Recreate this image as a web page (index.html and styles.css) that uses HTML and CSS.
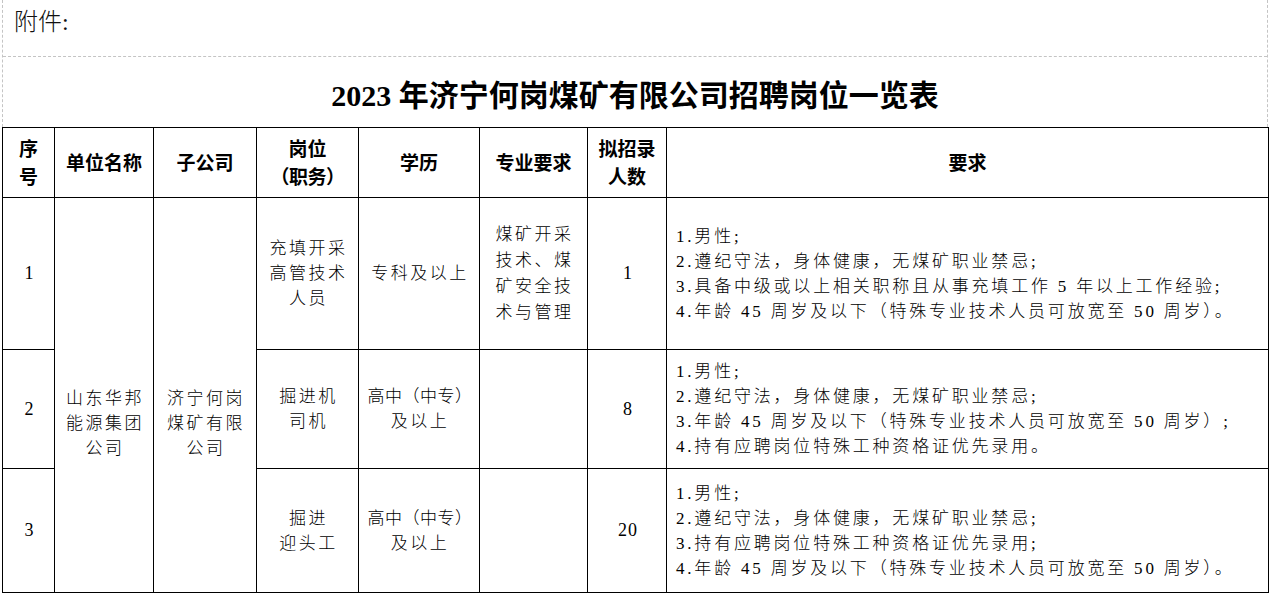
FILE: index.html
```html
<!DOCTYPE html>
<html lang="zh-CN">
<head>
<meta charset="utf-8">
<title>2023年济宁何岗煤矿有限公司招聘岗位一览表</title>
<link rel="stylesheet" href="styles.css">
</head>
<body>
<div class="sheet">
  <div class="head">
    <div class="attach">附件:</div>
    <div class="title">2023 年济宁何岗煤矿有限公司招聘岗位一览表</div>
  </div>
  <table class="grid">
    <colgroup>
      <col class="c-no"><col class="c-unit"><col class="c-sub"><col class="c-post">
      <col class="c-edu"><col class="c-major"><col class="c-num"><col class="c-req">
    </colgroup>
    <thead>
      <tr class="r-head">
        <th>序<br>号</th>
        <th>单位名称</th>
        <th>子公司</th>
        <th>岗位<br><span class="paren">（职务）</span></th>
        <th>学历</th>
        <th>专业要求</th>
        <th>拟招录<br>人数</th>
        <th>要求</th>
      </tr>
    </thead>
    <tbody>
      <tr class="r1">
        <td class="num">1</td>
        <td class="merged" rowspan="3">山东华邦<br>能源集团<br>公司</td>
        <td class="merged" rowspan="3">济宁何岗<br>煤矿有限<br>公司</td>
        <td>充填开采<br>高管技术<br>人员</td>
        <td>专科及以上</td>
        <td class="major">煤矿开采<br>技术、煤<br>矿安全技<br>术与管理</td>
        <td class="num">1</td>
        <td class="req">1.男性;<br>2.遵纪守法，身体健康，无煤矿职业禁忌;<br>3.具备中级或以上相关职称且从事充填工作 5 年以上工作经验;<br>4.年龄 45 周岁及以下（特殊专业技术人员可放宽至 50 周岁）。</td>
      </tr>
      <tr class="r2">
        <td class="num">2</td>
        <td>掘进机<br>司机</td>
        <td><span class="tight">高中（中专）</span><br>及以上</td>
        <td></td>
        <td class="num">8</td>
        <td class="req">1.男性;<br>2.遵纪守法，身体健康，无煤矿职业禁忌;<br>3.年龄 45 周岁及以下（特殊专业技术人员可放宽至 50 周岁）;<br>4.持有应聘岗位特殊工种资格证优先录用。</td>
      </tr>
      <tr class="r3">
        <td class="num">3</td>
        <td>掘进<br>迎头工</td>
        <td><span class="tight">高中（中专）</span><br>及以上</td>
        <td></td>
        <td class="num">20</td>
        <td class="req">1.男性;<br>2.遵纪守法，身体健康，无煤矿职业禁忌;<br>3.持有应聘岗位特殊工种资格证优先录用;<br>4.年龄 45 周岁及以下（特殊专业技术人员可放宽至 50 周岁）。</td>
      </tr>
    </tbody>
  </table>
</div>
</body>
</html>
```
FILE: styles.css
```css
html, body {
  margin: 0;
  padding: 0;
  background: #fff;
}
body {
  font-family: "Liberation Serif", "Noto Sans CJK SC", serif;
  color: #000;
}
.sheet {
  width: 1266px;
  margin-left: 2px;
}
.head {
  border-left: 1px dashed #c4c4c4;
  border-right: 1px dashed #c4c4c4;
}
.attach {
  height: 56px;
  border-bottom: 1px dashed #c4c4c4;
  padding-left: 11px;
  font-size: 24px;
  line-height: 44px;
  font-weight: 300;
  color: #111;
}
.title {
  height: 70px;
  display: flex;
  align-items: center;
  justify-content: center;
  font-size: 30px;
  font-weight: 700;
  padding-top: 2px;
  box-sizing: border-box;
}
.grid {
  width: 1266px;
  table-layout: fixed;
  border-collapse: collapse;
}
.c-no { width: 52px; }
.c-unit { width: 99px; }
.c-sub { width: 103px; }
.c-post { width: 102px; }
.c-edu { width: 121px; }
.c-major { width: 108px; }
.c-num { width: 79px; }
.c-req { width: 602px; }
.grid th, .grid td {
  border: 1px solid #000;
  padding: 0;
  text-align: center;
  vertical-align: middle;
}
.grid th {
  font-size: 19px;
  font-weight: 700;
  line-height: 28px;
  padding-top: 2px;
}
.paren { letter-spacing: -0.5px; }
.grid td {
  font-size: 17px;
  font-weight: 300;
  letter-spacing: 2.5px;
  line-height: 25px;
  padding-left: 2px;
  white-space: nowrap;
}
.r-head { height: 70px; }
.r1 { height: 152px; }
.r2 { height: 119px; }
.r3 { height: 124px; }
.grid td.num {
  font-size: 18px;
  letter-spacing: 1px;
  font-weight: 400;
}
.grid td.merged {
  padding-top: 57px;
}
.grid td.major {
  line-height: 26px;
}
.tight { letter-spacing: 0.5px; }
.grid td.req {
  text-align: left;
  padding-left: 9px;
  letter-spacing: 2.8px;
}
```
